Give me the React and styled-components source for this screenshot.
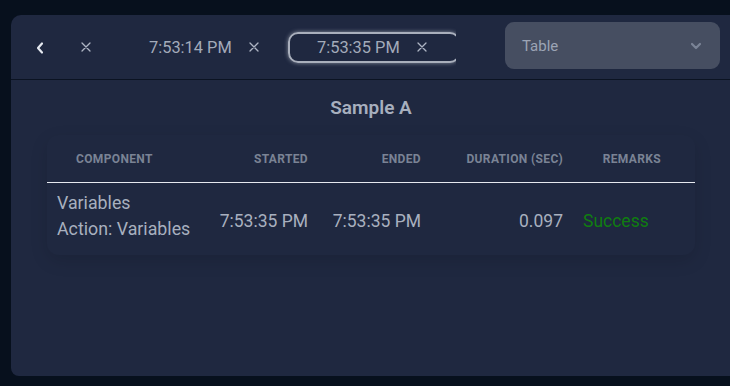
import React, { useEffect, useRef } from 'react'
import styled, { createGlobalStyle } from 'styled-components'

const GlobalStyle = createGlobalStyle`
  html, body {
    margin: 0;
    padding: 0;
    background: #07101d;
    overflow: hidden;
  }
  body {
    font-family: Roboto, "Liberation Sans", sans-serif;
  }
`

const tabs = [
  { id: 1, label: '' },
  { id: 2, label: '7:53:14 PM' },
  { id: 3, label: '7:53:35 PM', active: true },
]

const rows = [
  { name: 'Variables', action: 'Action: Variables', started: '7:53:35 PM', ended: '7:53:35 PM', duration: '0.097', remarks: 'Success' },
]

function Chevron() {
  return (
    <svg width="10" height="14" viewBox="0 0 10 14">
      <path d="M7 2.5 L3 7 L7 11.5" fill="none" stroke="#e4e8ef" strokeWidth="2.2" strokeLinecap="round" strokeLinejoin="round" />
    </svg>
  )
}

function CloseIcon() {
  return (
    <svg width="10" height="10" viewBox="0 0 10 10">
      <path d="M1 1 L9 9 M9 1 L1 9" stroke="#aeb5c3" strokeWidth="1.3" strokeLinecap="round" />
    </svg>
  )
}

function DownIcon() {
  return (
    <svg width="12" height="8" viewBox="0 0 12 8">
      <path d="M2 2 L6 6 L10 2" fill="none" stroke="#7b8497" strokeWidth="2.2" strokeLinecap="round" strokeLinejoin="round" />
    </svg>
  )
}

function App() {
  const stripRef = useRef(null)

  useEffect(() => {
    // tab strip is scrolled so the first tab's label is out of view
    if (stripRef.current) stripRef.current.scrollLeft = 117
  }, [])

  return (
    <>
      <GlobalStyle />
      <Page>
        <Panel>
          <Header>
            <BackButton>
              <Chevron />
            </BackButton>
            <TabStrip ref={stripRef}>
              {tabs.map((t) => (
                <Tab key={t.id} active={t.active}>
                  <TabLabel>{t.label}</TabLabel>
                  <TabClose>
                    <CloseIcon />
                  </TabClose>
                </Tab>
              ))}
            </TabStrip>
            <Select>
              <span>Table</span>
              <DownIcon />
            </Select>
          </Header>
          <Content>
            <Title>Sample A</Title>
            <Card>
              <Grid>
                <HeadCell pad="0 0 0 29px">Component</HeadCell>
                <HeadCell align="right">Started</HeadCell>
                <HeadCell align="right">Ended</HeadCell>
                <HeadCell align="right">Duration (sec)</HeadCell>
                <HeadCell align="right" pad="0 34px 0 0">Remarks</HeadCell>
              </Grid>
              <Divider />
              {rows.map((r, i) => (
                <Grid key={i}>
                  <NameCell>
                    <div>{r.name}</div>
                    <div>{r.action}</div>
                  </NameCell>
                  <Cell align="right">{r.started}</Cell>
                  <Cell align="right">{r.ended}</Cell>
                  <Cell align="right">{r.duration}</Cell>
                  <Cell status>{r.remarks}</Cell>
                </Grid>
              ))}
            </Card>
          </Content>
        </Panel>
      </Page>
    </>
  )
}

export default App

const Page = styled.div`
  padding: 15px 0 10px 11px;
  height: 386px;
  box-sizing: border-box;
`
const Panel = styled.div`
  width: 720px;
  height: 361px;
  background: #1f2840;
  border-radius: 10px 0 0 8px;
  overflow: hidden;
`
const Header = styled.div`
  height: 64px;
  display: flex;
  align-items: center;
  border-bottom: 1px solid #0b1322;
  padding: 0 11px 0 0;
`
const BackButton = styled.div`
  width: 58px;
  flex-shrink: 0;
  display: flex;
  justify-content: center;
  align-items: center;
  padding-top: 1px;
`
const TabStrip = styled.div`
  width: 387px;
  height: 40px;
  display: flex;
  align-items: center;
  overflow: hidden;
  flex-shrink: 0;
`
const Tab = styled.div`
  flex: 0 0 ${(p) => (p.active ? '172px' : '168px')};
  height: 31px;
  box-sizing: border-box;
  display: flex;
  align-items: center;
  padding-left: 27px;
  border-radius: 10px;
  border: 2px solid ${(p) => (p.active ? '#a9afbc' : 'transparent')};
  box-shadow: ${(p) => (p.active ? '0 0 4px rgba(220,225,235,0.55)' : 'none')};
  font-size: 16.4px;
  color: #a3abba;
`
const TabLabel = styled.span`
  width: 100px;
  white-space: nowrap;
`
const TabClose = styled.span`
  display: flex;
  align-items: center;
`
const Select = styled.div`
  margin-left: auto;
  width: 215px;
  height: 47px;
  box-sizing: border-box;
  background: #464e61;
  border-radius: 9px;
  display: flex;
  align-items: center;
  justify-content: space-between;
  padding: 0 18px 0 17px;
  font-size: 15px;
  color: #9ca4b5;
  margin-top: -3px;
`
const Content = styled.div`
  padding: 16px 36px 0;
`
const Title = styled.div`
  text-align: center;
  font-size: 19px;
  font-weight: 600;
  color: #a7afbe;
  line-height: 24px;
`
const Card = styled.div`
  margin-top: 15px;
  border-radius: 12px;
  box-shadow: 0 6px 18px rgba(0, 0, 0, 0.12);
`
const Grid = styled.div`
  display: grid;
  grid-template-columns: 153px 118px 113px 142px 122px;
  align-items: stretch;
`
const HeadCell = styled.div`
  height: 47px;
  display: flex;
  align-items: center;
  justify-content: ${(p) => (p.align === 'right' ? 'flex-end' : 'flex-start')};
  padding: ${(p) => p.pad || '0 10px'};
  font-size: 12px;
  font-weight: 700;
  letter-spacing: 0.35px;
  text-transform: uppercase;
  color: #7a8395;
  white-space: nowrap;
`
const Divider = styled.div`
  height: 1px;
  background: #e6e9ef;
`
const Cell = styled.div`
  padding: 4px 10px 0;
  height: 72px;
  box-sizing: border-box;
  display: flex;
  align-items: center;
  justify-content: ${(p) => (p.align === 'right' ? 'flex-end' : 'flex-start')};
  font-size: 17.5px;
  color: ${(p) => (p.status ? '#107d10' : '#a8b0bf')};
  white-space: nowrap;
`
const NameCell = styled.div`
  padding: 7px 10px 0;
  height: 72px;
  box-sizing: border-box;
  font-size: 17.8px;
  line-height: 26px;
  color: #a8b0bf;
  white-space: nowrap;
`
